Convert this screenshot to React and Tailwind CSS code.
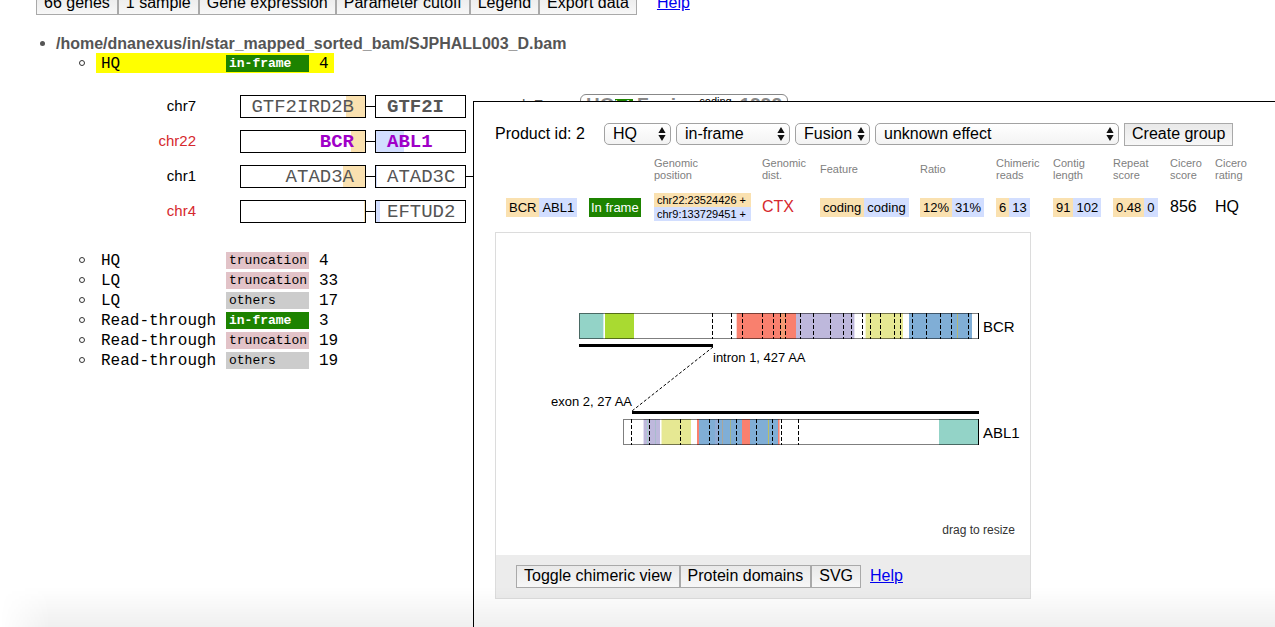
import React from "react";

const toolbar = ["66 genes", "1 sample", "Gene expression", "Parameter cutoff", "Legend", "Export data"];

const TAGS = {
  "in-frame": "bg-[#1d8300] text-white font-bold",
  truncation: "bg-[#e2c3c8] text-black",
  others: "bg-[#cccccc] text-black",
};

const groups = [
  ["HQ", "truncation", 4],
  ["LQ", "truncation", 33],
  ["LQ", "others", 17],
  ["Read-through", "in-frame", 3],
  ["Read-through", "truncation", 19],
  ["Read-through", "others", 19],
];

const pairs = [
  { chr: "chr7", left: "GTF2IRD2B", lf: 19, right: "GTF2I", rf: 0, rightBold: true },
  { chr: "chr22", red: true, left: "BCR", lf: 14, right: "ABL1", rf: 28, known: true },
  { chr: "chr1", left: "ATAD3A", lf: 22, right: "ATAD3C", rf: 1, linked: true },
  { chr: "chr4", red: true, left: "", lf: 1, right: "EFTUD2", rf: 4 },
];

function PushButton({ children }) {
  return (
    <button
      type="button"
      className="h-[23px] whitespace-nowrap border border-[#a9a9a9] bg-linear-to-b from-[#e9e9e9] to-[#f7f7f7] px-[7px] pb-[2px] text-base leading-[19px] text-black"
    >
      {children}
    </button>
  );
}

function GroupRow({ name, tag, count, active }) {
  return (
    <li className="flex h-5 items-center">
      <span className="mr-[11px] size-[6px] rounded-full border border-[#333]" />
      <a
        href="#group"
        className={
          "flex h-5 items-center pr-[5px] pl-[5px] font-['Liberation_Mono',monospace] text-base leading-5 text-black " +
          (active ? "bg-[#ffff00]" : "")
        }
      >
        <span className="w-[125px] pt-[2px] leading-[18px]">{name}</span>
        <span className={"mr-[10px] h-[17px] w-[83px] pl-[3px] text-[13px] leading-[17px] " + TAGS[tag]}>{tag}</span>
        <span className="pt-[2px] leading-[18px]">{count}</span>
      </a>
    </li>
  );
}

function GenePair({ pair }) {
  const tone = pair.known ? "text-[#a000c8] font-bold" : "text-[#555]";
  return (
    <div className="flex h-[23px] items-center">
      <span className={"w-[160px] text-right text-[15px] " + (pair.red ? "text-[#d6282d]" : "text-black")}>
        {pair.chr}
      </span>
      <div className="relative ml-11 flex h-[23px] w-[126px] items-center justify-end border border-black bg-white pr-[11px]">
        <span className="absolute inset-y-0 right-0 bg-[#fae1b0]" style={{ width: pair.lf }} />
        <span className={"relative font-['Liberation_Mono',monospace] text-[19px] leading-5 " + tone}>{pair.left}</span>
      </div>
      <span className="h-px w-[9px] bg-black" />
      <div className="relative flex h-[23px] w-[91px] items-center border border-black bg-white pl-[11px]">
        <span className="absolute inset-y-0 left-0 bg-[#d2deff]" style={{ width: pair.rf }} />
        <span
          className={
            "relative font-['Liberation_Mono',monospace] text-[19px] leading-5 " + tone + (pair.rightBold ? " font-bold" : "")
          }
        >
          {pair.right}
        </span>
      </div>
      {pair.linked && <span className="h-px w-4 bg-black" />}
    </div>
  );
}

function Picker({ label, value, width }) {
  return (
    <span className={"relative inline-flex " + width}>
      <select
        aria-label={label}
        defaultValue={value}
        className="h-[22px] w-full appearance-none rounded-[5px] border border-[#a2a2a2] bg-linear-to-b from-white to-[#f3f3f3] pl-2 text-base leading-5 text-black"
      >
        <option>{value}</option>
      </select>
      <svg className="pointer-events-none absolute top-1 right-[5px] h-[14px] w-2" viewBox="0 0 8 14" aria-hidden="true">
        <path d="M4 0 L7.6 6 H0.4 Z M4 14 L7.6 8 H0.4 Z" fill="#111" />
      </svg>
    </span>
  );
}

function Split({ a, b }) {
  return (
    <span className="inline-flex h-[19px] text-[13px] leading-[19px] whitespace-nowrap">
      <span className="bg-[#fae1b0] px-[3px]">{a}</span>
      <span className="bg-[#d2deff] px-[3px]">{b}</span>
    </span>
  );
}

const T = "#93d3c7";
const R = "#f9806e";
const P = "#beb8dc";
const Y = "#e6e893";
const B = "#80aed6";

const bcrDomains = [
  [579, 603, T], [603, 604, "#d5eeea"], [605, 634, "#a9da31"], [736, 737, "#fdd5cf"], [737, 796, R],
  [781, 785, "#f39a72"], [796, 854, P], [854, 855, "#e5e2f1"], [865, 866, "#f5f6d6"], [866, 903, Y],
  [909, 972, B], [957, 958, "#b3b777"],
];
const bcrExons = [712, 731, 742, 762, 773, 780, 785, 800, 813, 830, 843, 851, 862, 870, 880, 894, 900, 912, 926, 940, 951, 968];
const ablDomains = [
  [643, 644, "#e3e0f0"], [644, 660, P], [647, 648, "#a8cfcb"], [655, 656, "#a9bccd"], [661, 662, "#f3f4cc"],
  [662, 691, Y], [697, 699, R], [699, 743, B], [715, 718, "#92add6"], [722, 723, "#a9a69e"],
  [730, 731, "#a3b48b"], [742, 750, R], [750, 778, B], [768, 769, "#b9be67"], [778, 779, R], [779, 780, "#f8b5aa"],
  [939, 979, T],
];
const ablExons = [631, 649, 680, 709, 718, 736, 756, 772, 781, 798];

function Protein({ start, y, domains, exons, name }) {
  return (
    <g>
      <rect x={start + 0.5} y={y + 0.5} width={978 - start} height="25" fill="#fff" />
      {domains.map(([a, b, c]) => (
        <rect key={a} x={a} y={y} width={b - a} height="26" fill={c} shapeRendering="crispEdges" />
      ))}
      <rect x={start + 0.5} y={y + 0.5} width={978 - start} height="25" fill="none" stroke="#000" strokeOpacity="0.5" />
      {exons.map((x) => (
        <path key={x} d={`M${x + 0.5} ${y}v26`} stroke="#000" strokeDasharray="4 2" />
      ))}
      <path d={`M978.5 ${y}v26`} stroke="#000" />
      <text x="983" y={y + 19} fontSize="15">{name}</text>
    </g>
  );
}

function FusionChart() {
  return (
    <svg
      className="block h-[322px] w-[534px] font-['Liberation_Sans',sans-serif]"
      viewBox="496 233 534 322"
      role="img"
      aria-label="BCR-ABL1 fusion"
    >
      <Protein start={579} y={313} domains={bcrDomains} exons={bcrExons} name="BCR" />
      <path d="M579 345.5H713" stroke="#000" strokeWidth="3" />
      <path d="M713 347L632 411" stroke="#000" strokeDasharray="3 2" />
      <path d="M632 412.5H979" stroke="#000" strokeWidth="3" />
      <text x="713" y="362" fontSize="13">intron 1, 427 AA</text>
      <text x="632" y="406" fontSize="13" textAnchor="end">exon 2, 27 AA</text>
      <Protein start={623} y={419} domains={ablDomains} exons={ablExons} name="ABL1" />
      <text x="1015" y="534" fontSize="12" fill="#333" textAnchor="end">drag to resize</text>
    </svg>
  );
}

function Th({ children, w }) {
  return <th className={"p-0 text-left align-middle font-normal " + w}>{children}</th>;
}

function ProductPanel() {
  return (
    <section className="absolute top-[101px] right-0 bottom-0 left-[473px] overflow-hidden border-t border-l border-black bg-white pt-[21px] pl-[21px]">
      <div className="flex items-start gap-[5px] whitespace-nowrap">
        <span className="w-[104px] text-base leading-[22px]">Product id: 2</span>
        <Picker label="Rating" value="HQ" width="w-[67px]" />
        <Picker label="Frame" value="in-frame" width="w-[114px]" />
        <Picker label="Type" value="Fusion" width="w-[75px]" />
        <Picker label="Effect" value="unknown effect" width="w-[244px]" />
        <PushButton>Create group</PushButton>
      </div>

      <table className="mt-[11px] ml-[11px] w-[749px] table-fixed border-collapse text-black">
        <thead>
          <tr className="h-6 text-[11px] leading-3 text-[#808080]">
            <Th w="w-[83px]" />
            <Th w="w-[65px]" />
            <Th w="w-[108px]">Genomic<br />position</Th>
            <Th w="w-[58px]">Genomic<br />dist.</Th>
            <Th w="w-[100px]">Feature</Th>
            <Th w="w-[76px]">Ratio</Th>
            <Th w="w-[57px]">Chimeric<br />reads</Th>
            <Th w="w-[60px]">Contig<br />length</Th>
            <Th w="w-[57px]">Repeat<br />score</Th>
            <Th w="w-[45px]">Cicero<br />score</Th>
            <Th w="w-[40px]">Cicero<br />rating</Th>
          </tr>
        </thead>
        <tbody>
          <tr className="h-[51px] text-base leading-[19px] [&>td]:p-0 [&>td]:align-middle [&>td>*]:align-middle">
            <td><Split a="BCR" b="ABL1" /></td>
            <td>
              <span className="inline-block h-[19px] bg-[#1d8300] px-[2px] text-[13px] leading-[19px] text-white">In frame</span>
            </td>
            <td>
              <div className="w-[97px] text-[11px] leading-[14px]">
                <div className="bg-[#fae1b0] px-[3px]">chr22:23524426 +</div>
                <div className="bg-[#d2deff] px-[3px]">chr9:133729451 +</div>
              </div>
            </td>
            <td className="text-[#d6282d]">CTX</td>
            <td><Split a="coding" b="coding" /></td>
            <td><Split a="12%" b="31%" /></td>
            <td><Split a="6" b="13" /></td>
            <td><Split a="91" b="102" /></td>
            <td><Split a="0.48" b="0" /></td>
            <td>856</td>
            <td>HQ</td>
          </tr>
        </tbody>
      </table>

      <div className="w-[536px] border border-[#dcdcdc]">
        <FusionChart />
        <div className="flex h-[43px] items-center bg-[#ececec] pl-5">
          <PushButton>Toggle chimeric view</PushButton>
          <PushButton>Protein domains</PushButton>
          <PushButton>SVG</PushButton>
          <a href="#help" className="ml-[9px] pb-[2px] text-base leading-5 text-[#0000ee] underline">Help</a>
        </div>
      </div>
    </section>
  );
}

export default function App() {
  return (
    <main className="relative h-screen overflow-hidden bg-white font-['Liberation_Sans',Arial,sans-serif] text-black">
      <nav className="-mt-2 flex h-[23px] items-center pl-9">
        {toolbar.map((t) => (
          <PushButton key={t}>{t}</PushButton>
        ))}
        <a href="#help" className="ml-5 pb-[2px] text-base leading-5 text-[#0000ee] underline">Help</a>
      </nav>

      <ul className="mt-[18px] pl-10">
        <li>
          <div className="flex h-5 items-center">
            <span className="mr-[11px] size-[5px] rounded-full bg-[#555]" />
            <span className="pt-[2px] text-base leading-[18px] font-bold text-[#555]">
              /home/dnanexus/in/star_mapped_sorted_bam/SJPHALL003_D.bam
            </span>
          </div>
          <ul className="pl-[39px]">
            <GroupRow name="HQ" tag="in-frame" count={4} active />
          </ul>
          <div className="relative mt-[22px] -ml-1 flex flex-col gap-3">
            {pairs.map((p) => (
              <GenePair key={p.chr} pair={p} />
            ))}
            <div className="absolute -top-px left-[481px] flex items-start whitespace-nowrap text-[#888]">
              <span className="w-[63px] pt-[2px] text-[15px] leading-[18px] text-[#555]">d. F</span>
              <div className="flex h-6 w-[208px] items-start rounded-md border border-[#888] px-[5px] text-[19px] leading-5 font-bold">
                <span>HQ</span>
                <span className="mt-1 h-3 w-[22px] bg-[#1d8300] text-center text-[9px] leading-[10px] text-white">in-fr</span>
                <span className="ml-1">Fusion</span>
                <span className="ml-auto text-[11px] leading-3 font-normal text-black">coding</span>
                <span className="ml-2">1992</span>
              </div>
              <span className="ml-8 pt-1 text-lg leading-5">N</span>
            </div>
          </div>
          <ul className="mt-[27px] pl-[39px]">
            {groups.map(([n, t, c], i) => (
              <GroupRow key={i} name={n} tag={t} count={c} />
            ))}
          </ul>
        </li>
      </ul>

      <ProductPanel />
      <div className="pointer-events-none absolute inset-x-0 bottom-0 h-10 bg-linear-to-b from-transparent to-black/6 [mask-image:linear-gradient(to_right,transparent,black_50px)]" />
    </main>
  );
}
